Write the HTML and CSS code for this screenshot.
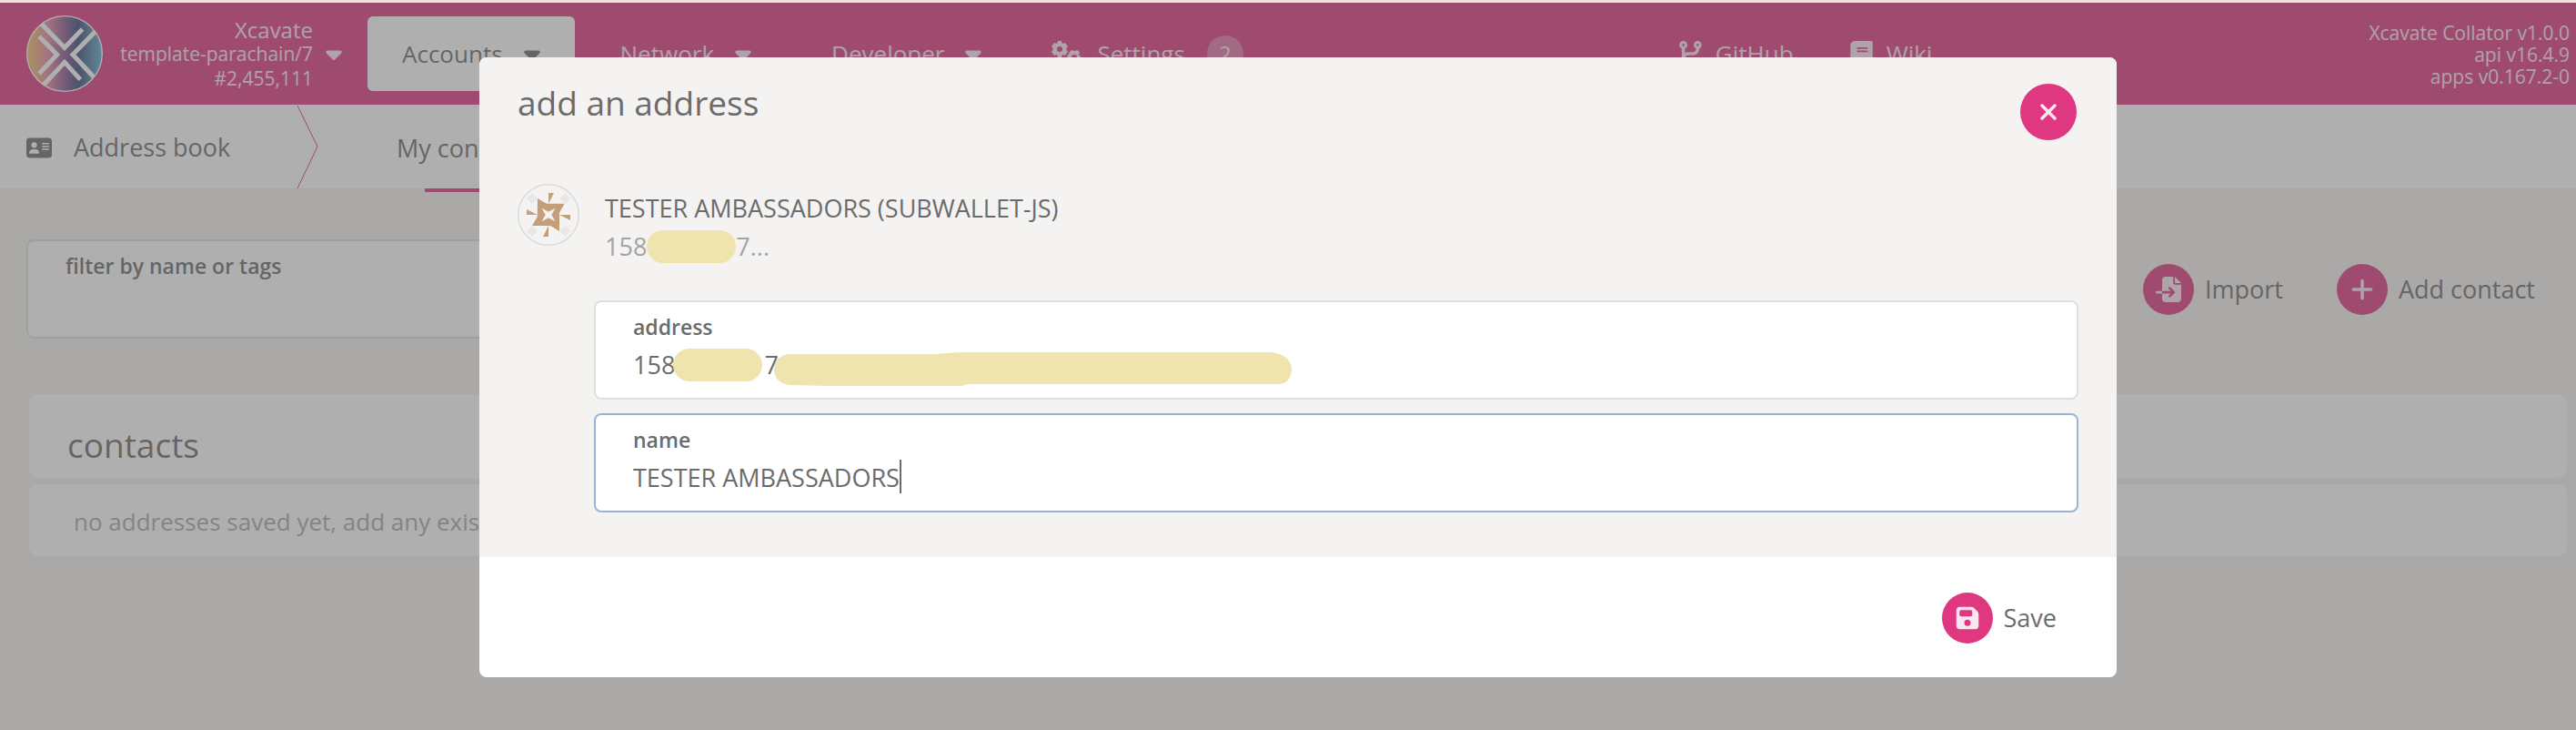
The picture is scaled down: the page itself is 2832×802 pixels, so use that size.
FILE: index.html
```html
<!DOCTYPE html>
<html lang="en">
<head>
<meta charset="utf-8">
<meta name="viewport" content="width=device-width, initial-scale=1">
<title>Address book</title>
<link rel="stylesheet" href="styles.css">
</head>
<body>
<svg class="sprite" aria-hidden="true">
  <symbol id="caret" viewBox="0 0 320 512"><path d="M137.400 374.600c12.500 12.500 32.800 12.500 45.300 0l128-128c9.200-9.200 11.900-22.900 6.900-34.900s-16.600-19.800-29.600-19.800L32 192c-12.900 0-24.600 7.800-29.600 19.800s-2.200 25.700 6.900 34.900l128 128z"/></symbol>
  <symbol id="card" viewBox="0 0 576 512"><path fill-rule="evenodd" d="M64 32C28.700 32 0 60.700 0 96V416c0 35.300 28.700 64 64 64H512c35.300 0 64-28.700 64-64V96c0-35.300-28.700-64-64-64H64zm80 256h64c44.200 0 80 35.800 80 80c0 8.800-7.200 16-16 16H80c-8.800 0-16-7.200-16-16c0-44.200 35.800-80 80-80zm-32-96a64 64 0 1 1 128 0 64 64 0 1 1 -128 0zm240-48H512v32H352zm0 64H512v32H352zm0 64H512v32H352z"/></symbol>
  <symbol id="gears" viewBox="0 0 32 28">
    <path fill-rule="evenodd" d="M7 0h4l1 3 3-1 3 4-2 3 2 3-3 4-3-1-1 3H7l-1-3-3 1-3-4 2-3-2-3 3-4 3 1zM9 6a3 3 0 1 0 0 6 3 3 0 1 0 0-6z"/>
    <path fill-rule="evenodd" d="M20 12l2-2 3 1 3-1 3 2-1 3 2 2v4l-3 1v3l-3 1-3-2-3 1-2-3 1-3-2-2 2-3zM25 15a3 3 0 1 0 0 6 3 3 0 1 0 0-6z"/>
  </symbol>
  <symbol id="branch" viewBox="0 0 448 512"><path fill-rule="evenodd" d="M80 104a24 24 0 1 0 0-48 24 24 0 1 0 0 48zm80-24c0 32.800-19.700 61-48 73.300v87.800c18.800-10.900 40.700-17.100 64-17.100h96c35.300 0 64-28.700 64-64v-6.700C307.700 141 288 112.800 288 80c0-44.200 35.800-80 80-80s80 35.800 80 80c0 32.800-19.700 61-48 73.300V160c0 70.700-57.300 128-128 128H176c-35.300 0-64 28.700-64 64v6.700c28.300 12.300 48 40.500 48 73.300c0 44.200-35.800 80-80 80s-80-35.800-80-80c0-32.800 19.700-61 48-73.300V352 153.300C19.700 141 0 112.800 0 80C0 35.800 35.800 0 80 0s80 35.800 80 80zm232 0a24 24 0 1 0 -48 0 24 24 0 1 0 48 0zM80 456a24 24 0 1 0 0-48 24 24 0 1 0 0 48z"/></symbol>
  <symbol id="book" viewBox="0 0 448 512"><path fill-rule="evenodd" d="M96 0C43 0 0 43 0 96V416c0 53 43 96 96 96H384h32c17.700 0 32-14.300 32-32s-14.300-32-32-32V384c17.700 0 32-14.300 32-32V32c0-17.700-14.300-32-32-32H384 96zm0 384H352v64H96c-17.700 0-32-14.300-32-32s14.300-32 32-32zm32-240c0-8.800 7.200-16 16-16H336c8.800 0 16 7.200 16 16s-7.200 16-16 16H144c-8.800 0-16-7.200-16-16zm16 48H336c8.800 0 16 7.200 16 16s-7.200 16-16 16H144c-8.800 0-16-7.200-16-16s7.200-16 16-16z"/></symbol>
  <symbol id="import" viewBox="0 0 512 512"><path d="M128 64c0-35.300 28.700-64 64-64H352V128c0 17.700 14.300 32 32 32H512V448c0 35.300-28.700 64-64 64H192c-35.300 0-64-28.700-64-64V336H302.100l-39 39c-9.400 9.400-9.400 24.600 0 33.900s24.600 9.400 33.900 0l80-80c9.400-9.400 9.400-24.600 0-33.900l-80-80c-9.400-9.400-24.600-9.400-33.900 0s-9.400 24.600 0 33.900l39 39H128V64zm0 224v48H24c-13.300 0-24-10.700-24-24s10.700-24 24-24H128zM512 128H384V0L512 128z"/></symbol>
  <symbol id="plus" viewBox="0 0 448 512"><path d="M256 80c0-17.700-14.300-32-32-32s-32 14.300-32 32V224H48c-17.700 0-32 14.300-32 32s14.300 32 32 32H192V432c0 17.700 14.300 32 32 32s32-14.300 32-32V288H400c17.700 0 32-14.300 32-32s-14.300-32-32-32H256V80z"/></symbol>
  <symbol id="xmark" viewBox="0 0 384 512"><path d="M342.600 150.600c12.500-12.500 12.500-32.800 0-45.300s-32.800-12.500-45.300 0L192 210.700 86.600 105.400c-12.500-12.500-32.800-12.500-45.300 0s-12.500 32.800 0 45.300L146.700 256 41.400 361.400c-12.500 12.500-12.500 32.800 0 45.300s32.800 12.500 45.300 0L192 301.300 297.400 406.600c12.500 12.500 32.800 12.500 45.300 0s12.500-32.800 0-45.300L237.300 256 342.600 150.600z"/></symbol>
  <symbol id="floppy" viewBox="0 0 448 512"><path fill-rule="evenodd" d="M64 32C28.700 32 0 60.700 0 96V416c0 35.300 28.700 64 64 64H384c35.300 0 64-28.700 64-64V173.300c0-17-6.700-33.300-18.700-45.300L352 50.700C340 38.700 323.700 32 306.700 32H64zm0 96c0-17.700 14.300-32 32-32H288c17.700 0 32 14.300 32 32v64c0 17.700-14.300 32-32 32H96c-17.700 0-32-14.300-32-32V128zM224 288a64 64 0 1 1 0 128 64 64 0 1 1 0-128z"/></symbol>
</svg>

<div class="app">
  <header class="topbar">
    <button class="chain" type="button">
      <svg class="chain-logo" viewBox="87 51 252 252" aria-hidden="true">
        <defs>
          <linearGradient id="logo-fill">
            <stop offset="0" stop-color="#f4bd6c"/>
            <stop offset=".1" stop-color="#f0b070"/>
            <stop offset=".28" stop-color="#e884a4"/>
            <stop offset=".52" stop-color="#84548c"/>
            <stop offset=".68" stop-color="#36487a"/>
            <stop offset="1" stop-color="#64b0d0"/>
          </linearGradient>
          <clipPath id="logo-clip"><circle cx="213" cy="177" r="124"/></clipPath>
        </defs>
        <circle cx="213" cy="177" r="124" fill="url(#logo-fill)"/>
        <g clip-path="url(#logo-clip)" fill="none" stroke="#fff" stroke-width="15">
          <path d="M130 72L213 157L272 96M129 120L188 180L129 243M323 95L240 180L318 263M136 288L213 205L265 262"/>
        </g>
        <circle cx="213" cy="177" r="124" fill="none" stroke="#fff" stroke-width="4"/>
      </svg>
      <span class="chain-info">
        <span class="chain-name">Xcavate</span>
        <span>template-parachain/7</span>
        <span>#2,455,111</span>
      </span>
      <svg class="caret"><use href="#caret"/></svg>
    </button>
    <nav class="menu">
      <a class="menu-item menu-item-active" href="#accounts">Accounts <svg class="caret"><use href="#caret"/></svg></a>
      <a class="menu-item" href="#network">Network <svg class="caret"><use href="#caret"/></svg></a>
      <a class="menu-item" href="#developer">Developer <svg class="caret"><use href="#caret"/></svg></a>
      <a class="menu-item menu-item-icon" href="#settings"><svg class="gears"><use href="#gears"/></svg> Settings <span class="badge">2</span></a>
    </nav>
    <nav class="links">
      <a class="link" href="#github"><svg class="link-icon"><use href="#branch"/></svg> GitHub</a>
      <a class="link" href="#wiki"><svg class="link-icon"><use href="#book"/></svg> Wiki</a>
    </nav>
    <div class="versions">
      <span>Xcavate Collator v1.0.0</span>
      <span>api v16.4.9</span>
      <span>apps v0.167.2-0</span>
    </div>
  </header>

  <div class="tabs">
    <div class="tabs-title"><svg class="card-icon"><use href="#card"/></svg> Address book</div>
    <svg class="chevron" viewBox="0 0 24 92" aria-hidden="true"><path d="M1 1L23 46L1 92"/></svg>
    <a class="tab" href="#contacts">My contacts</a>
  </div>

  <main class="content">
    <div class="toolbar">
      <div class="field filter">
        <label for="filter">filter by name or tags</label>
        <input id="filter" type="text">
      </div>
      <button class="action" type="button"><span class="action-icon"><svg class="icon"><use href="#import"/></svg></span>Import</button>
      <button class="action" type="button"><span class="action-icon"><svg class="icon"><use href="#plus"/></svg></span>Add contact</button>
    </div>
    <section class="contacts">
      <h2 class="panel contacts-title">contacts</h2>
      <p class="panel contacts-empty">no addresses saved yet, add any existing address</p>
    </section>
  </main>

  <div class="overlay">
    <section class="modal" role="dialog" aria-modal="true" aria-labelledby="modal-title">
      <div class="modal-header">
        <h1 id="modal-title">add an address</h1>
        <button class="close" type="button" aria-label="Close"><svg class="icon"><use href="#xmark"/></svg></button>
      </div>
      <div class="modal-body">
        <div class="account">
          <svg class="identicon" viewBox="27 36 204 204" aria-hidden="true">
            <circle cx="129" cy="138" r="100" fill="#f4f3f1" stroke="#dedddc" stroke-width="5"/>
            <path fill="#e8e8e8" d="M75 66l18 18-18 18-18-18zM184 66l18 18-18 18-18-18zM75 174l18 18-18 18-18-18zM184 174l18 18-18 18-18-18z"/>
            <path fill="#c49f7a" d="M93 84L123 101H182L165 131V192L135 174H75L92 145zM129 66H147L129 101zM57 120L92 138H57zM165 138H201V156zM129 174V210H111z"/>
            <path fill="#f4f3f1" d="M107 116L129 128L151 116L139 138L151 160L129 148L107 160L119 138z"/>
          </svg>
          <div class="account-text">
            <div class="account-name">TESTER AMBASSADORS (SUBWALLET-JS)</div>
            <div class="account-address">158<span class="redaction"></span>7...</div>
          </div>
        </div>
        <div class="fields">
          <div class="field">
            <label for="address">address</label>
            <input id="address" type="text" value="158              7">
            <span class="redaction mask-short"></span>
            <svg class="mask-long" viewBox="0 0 569 38" preserveAspectRatio="none" aria-hidden="true"><path d="M17 2H176L204 0H545Q569 2 569 20Q567 36 552 35H212L206 37H60L18 36Q0 34 0 18Q2 3 17 2z"/></svg>
          </div>
          <div class="field field-focused">
            <label for="name">name</label>
            <input id="name" type="text" value="TESTER AMBASSADORS">
            <span class="text-cursor"></span>
          </div>
        </div>
      </div>
      <div class="modal-footer">
        <button class="action" type="button"><span class="action-icon"><svg class="icon"><use href="#floppy"/></svg></span>Save</button>
      </div>
    </section>
  </div>
</div>
</body>
</html>
```

FILE: styles.css
```css
:root {
  --pink: #df3780;
  --page: #f5f3f1;
  --text: #6b6b6b;
  --mask: #efe3ae;
}

* { box-sizing: border-box; }

body {
  margin: 0;
  min-height: 100vh;
  display: flex;
  flex-direction: column;
  border-top: 3px solid #f3dfdb;
  background: var(--page);
  color: var(--text);
  font: 27px/38px "Open Sans", "Noto Sans", sans-serif;
}

button, input { font: inherit; color: inherit; }
button { border: 0; padding: 0; background: none; cursor: pointer; }
a { color: inherit; text-decoration: none; }
h1, h2, p { margin: 0; font-weight: 400; }
svg { flex: none; fill: currentColor; }

.sprite { position: absolute; width: 0; height: 0; }

.app {
  position: relative;
  flex: 1;
  display: flex;
  flex-direction: column;
}

.icon { width: 28px; height: 28px; }
.caret { width: 18px; height: 28px; }

.topbar {
  display: flex;
  align-items: center;
  height: 112px;
  padding: 0 7px 0 29px;
  background: var(--pink);
  color: #fbe7f0;
  font-size: 26px;
  white-space: nowrap;
}

.chain {
  display: flex;
  align-items: center;
  gap: 14px;
  width: 347px;
}

.chain-logo { width: 84px; height: 84px; }

.chain-info {
  flex: 1;
  display: flex;
  flex-direction: column;
  font-size: 21px;
  line-height: 27px;
  text-align: right;
}

.chain-name { font-size: 24px; }

.menu {
  display: flex;
  gap: 12px;
  margin-left: 28px;
}

.menu-item {
  display: flex;
  align-items: center;
  gap: 23px;
  height: 82px;
  padding: 0 38px;
  border-radius: 6px;
}

.menu-item-active { background: #fff; color: var(--text); }
.menu-item-icon { gap: 18px; padding: 0 27px; }
.gears { width: 32px; height: 28px; }

.badge {
  width: 40px;
  height: 40px;
  margin-left: 6px;
  border-radius: 50%;
  background: #e775a6;
  font-size: 24px;
  line-height: 40px;
  text-align: center;
}

.links {
  display: flex;
  gap: 62px;
  margin: 0 auto;
}

.link { display: flex; align-items: center; gap: 15px; }
.link-icon { width: 25px; height: 28px; }

.versions {
  display: flex;
  flex-direction: column;
  padding: 2px 0 0 28px;
  font-size: 21px;
  line-height: 24px;
  text-align: right;
}

.tabs {
  display: flex;
  height: 93px;
  border-bottom: 1px solid #f1efee;
  background: #fff;
}

.tabs-title {
  display: flex;
  align-items: center;
  gap: 24px;
  width: 326px;
  padding: 2px 0 0 29px;
}

.card-icon { width: 28px; height: 25px; }
.chevron { width: 24px; height: 92px; fill: none; stroke: var(--pink); stroke-width: 1; }

.tab {
  position: relative;
  display: flex;
  align-items: center;
  padding: 3px 86px 0;
}

.tab::after {
  content: "";
  position: absolute;
  left: 117px;
  right: 117px;
  bottom: -4px;
  height: 4px;
  background: var(--pink);
}

.content { padding: 55px 10px 0 29px; }

.toolbar {
  display: flex;
  align-items: center;
  gap: 59px;
  padding-right: 35px;
}

.field {
  position: relative;
  height: 109px;
  padding: 11px 41px;
  border: 2px solid #dededd;
  border-radius: 8px;
  background: #fff;
}

.field label {
  display: block;
  font-size: 23px;
  font-weight: 600;
  line-height: 32px;
}

.field input {
  display: block;
  width: 100%;
  height: 50px;
  padding: 0;
  border: 0;
  outline: 0;
  background: none;
}

.filter { flex: 1; }

.action {
  display: flex;
  align-items: center;
  gap: 12px;
  white-space: nowrap;
}

.action-icon, .close {
  display: grid;
  place-items: center;
  width: 56px;
  height: 56px;
  border-radius: 50%;
  background: var(--pink);
  color: #fbe7f0;
}

.contacts {
  display: flex;
  flex-direction: column;
  gap: 7px;
  margin: 61px 0 0 3px;
}

.panel { border-radius: 10px; background: #fff; }

.contacts-title {
  height: 92px;
  padding: 32px 42px 0;
  font-size: 37px;
  line-height: 48px;
}

.contacts-empty {
  height: 79px;
  padding: 22px 49px;
  color: #a8a8a8;
  font-size: 26px;
}

.overlay {
  position: absolute;
  inset: 0;
  display: flex;
  justify-content: center;
  align-items: flex-start;
  padding: 60px 0 0 22px;
  background: rgba(96, 96, 96, .5);
}

.modal {
  width: 90%;
  max-width: 1800px;
  border-radius: 8px;
  background: #fff;
  overflow: hidden;
}

.modal-header {
  display: flex;
  justify-content: space-between;
  align-items: flex-start;
  padding: 23px 44px 0 42px;
  background: #f4f3f1;
}

.modal-header h1 { font-size: 37px; line-height: 54px; }
.close { width: 62px; height: 62px; margin-top: 6px; }

.modal-body {
  padding: 48px 42px 49px;
  background: #f4f3f1;
}

.account { display: flex; gap: 28px; }
.identicon { width: 68px; height: 68px; }
.account-text { padding-top: 6px; line-height: 42px; }

.account-address {
  display: flex;
  align-items: center;
  color: #a3a3a2;
}

.redaction {
  width: 98px;
  height: 36px;
  border-radius: 18px;
  background: var(--mask);
}

.fields {
  display: grid;
  gap: 15px;
  margin: 38px 0 0 84px;
}

.field-focused { border-color: #97b4d6; }

.mask-short { position: absolute; left: 85px; top: 51px; }

.mask-long {
  position: absolute;
  left: 196px;
  top: 55px;
  width: 569px;
  height: 38px;
  fill: var(--mask);
}

.text-cursor {
  position: absolute;
  left: 334px;
  top: 49px;
  width: 2px;
  height: 37px;
  background: var(--text);
}

.modal-footer {
  display: flex;
  justify-content: flex-end;
  padding: 39px 66px 37px;
}
```
